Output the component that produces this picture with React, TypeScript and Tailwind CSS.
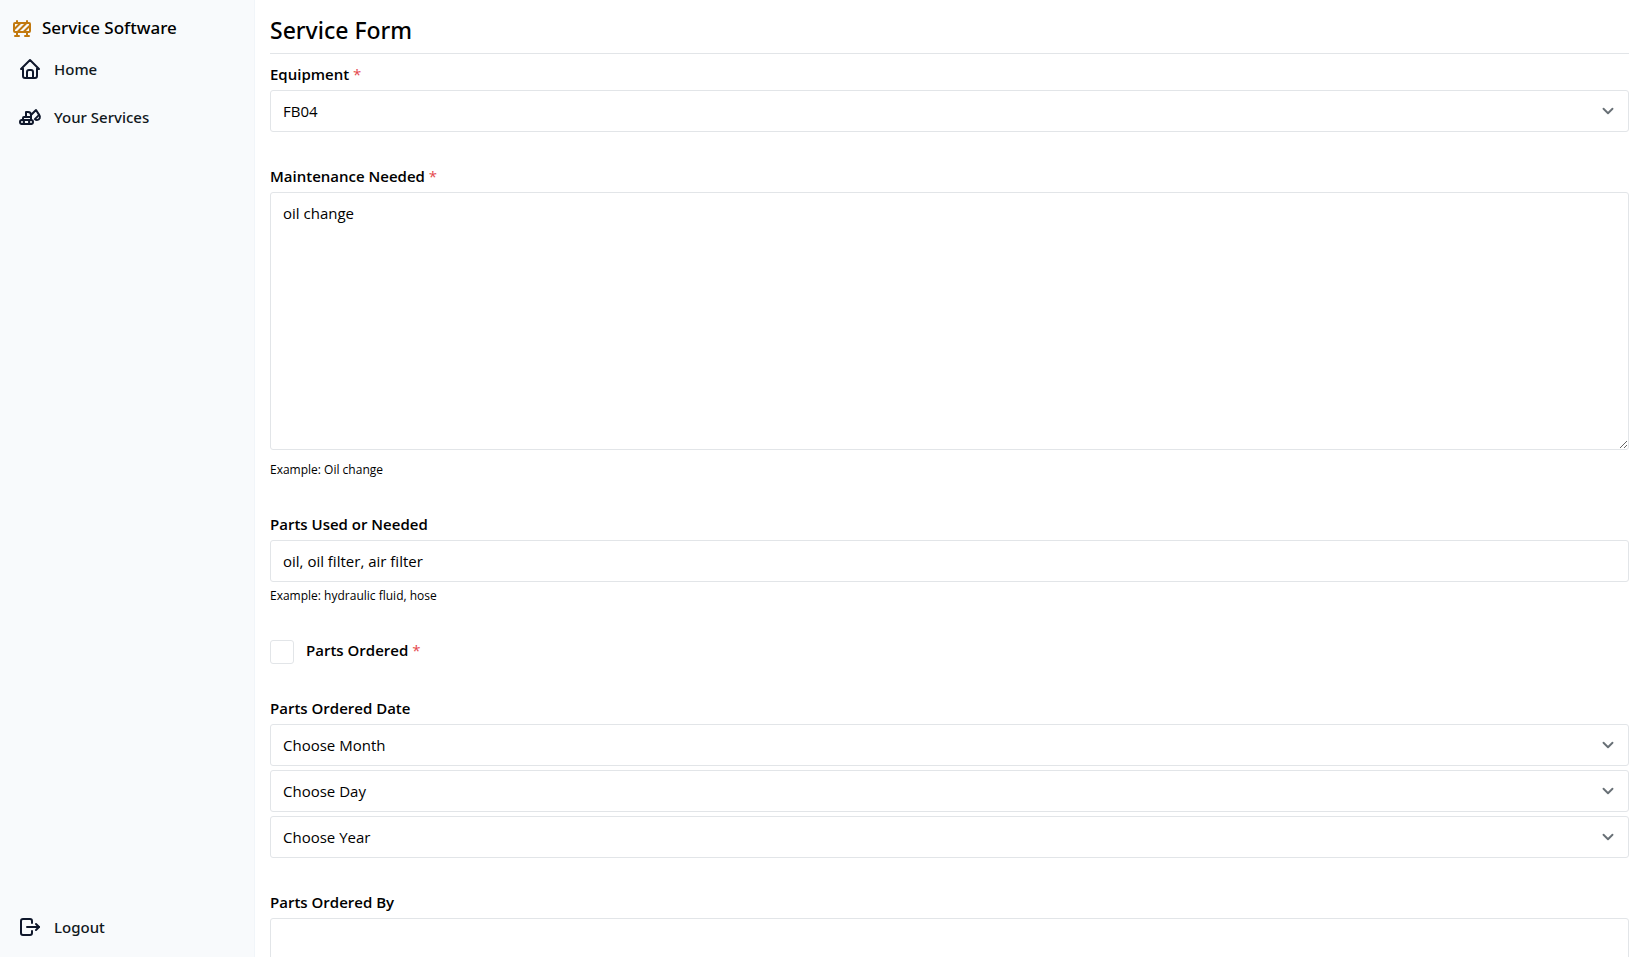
import type {ReactNode} from 'react'
import type {IconType} from 'react-icons'
import {
  TbBackhoe,
  TbBarrierBlock,
  TbChevronDown,
  TbHome,
  TbLogout,
} from 'react-icons/tb'

const controlStyles =
  'block w-full rounded-[3px] border border-[#e2e5e8] bg-white px-3 py-2 text-[15px] leading-6 text-black outline-none focus:border-gray-400'

export default function App() {
  return (
    <div className="flex h-screen bg-white font-['Open_Sans','Noto_Sans',sans-serif] text-black">
      <Sidebar />
      <main className="min-w-0 flex-1 overflow-y-auto pt-3 pr-[13px] pb-8 pl-[15px] [scrollbar-width:none]">
        <h1 className="mb-2 h-[42px] border-b border-[#e2e5e8] font-['Noto_Sans',sans-serif] text-[23px] leading-9 font-medium">
          Service Form
        </h1>
        <ServiceForm />
      </main>
    </div>
  )
}

function Sidebar() {
  return (
    <aside className="flex w-[255px] shrink-0 flex-col border-r border-[#f1f5f9] bg-[#f8fafc] pb-1.5 font-['Noto_Sans',sans-serif]">
      <div className="flex items-center gap-2 px-2.5 pt-4 pb-[5px] text-[17px] leading-6 font-medium">
        <TbBarrierBlock className="size-6 text-[#c2790f]" />
        Service Software
      </div>
      <nav className="flex flex-1 flex-col">
        <SidebarLink icon={TbHome} label="Home" />
        <SidebarLink icon={TbBackhoe} label="Your Services" />
        <div className="mt-auto">
          <SidebarLink icon={TbLogout} label="Logout" />
        </div>
      </nav>
    </aside>
  )
}

function SidebarLink(props: {icon: IconType; label: string}) {
  const Icon = props.icon
  return (
    <a
      href="#"
      className="flex h-12 items-center gap-3 px-[18px] text-[15px] leading-6 font-medium text-[#11181c]"
    >
      <Icon className="size-6 text-slate-900" />
      {props.label}
    </a>
  )
}

function ServiceForm() {
  return (
    <form className="flex flex-col gap-8">
      <Field id="equipment" label="Equipment" required>
        <Select id="equipment" options={['FB04']} />
      </Field>

      <Field id="maintenance" label="Maintenance Needed" required>
        <textarea
          id="maintenance"
          rows={10}
          defaultValue="oil change"
          className={controlStyles}
        />
        <Hint className="pt-2.5">Example: Oil change</Hint>
      </Field>

      <Field id="parts" label="Parts Used or Needed">
        <input
          id="parts"
          type="text"
          defaultValue="oil, oil filter, air filter"
          className={controlStyles}
        />
        <Hint className="pt-1">Example: hydraulic fluid, hose</Hint>
      </Field>

      <div className="flex items-start gap-3">
        <input
          id="ordered"
          type="checkbox"
          className="mt-0.5 size-6 appearance-none rounded-[3px] border border-[#e2e5e8] bg-white checked:bg-gray-700"
        />
        <Label htmlFor="ordered" required>
          Parts Ordered
        </Label>
      </div>

      <Field id="month" label="Parts Ordered Date">
        <div className="flex flex-col gap-1">
          <Select id="month" options={['Choose Month']} />
          <Select id="day" label="Day" options={['Choose Day']} />
          <Select id="year" label="Year" options={['Choose Year']} />
        </div>
      </Field>

      <Field id="ordered-by" label="Parts Ordered By">
        <input id="ordered-by" type="text" className={controlStyles} />
      </Field>
    </form>
  )
}

function Field(props: {
  id: string
  label: string
  required?: boolean
  children: ReactNode
}) {
  return (
    <div>
      <div className="mb-1 flex">
        <Label htmlFor={props.id} required={props.required}>
          {props.label}
        </Label>
      </div>
      {props.children}
    </div>
  )
}

function Label(props: {
  htmlFor: string
  required?: boolean
  children: ReactNode
}) {
  return (
    <label
      htmlFor={props.htmlFor}
      className="text-[15px] leading-6 font-semibold"
    >
      {props.children}
      {props.required && (
        <span className="font-normal text-[#e5484d]"> *</span>
      )}
    </label>
  )
}

function Hint(props: {className: string; children: ReactNode}) {
  return (
    <div className={props.className}>
      <p className="text-xs leading-5">{props.children}</p>
    </div>
  )
}

function Select(props: {id: string; label?: string; options: string[]}) {
  return (
    <div className="relative">
      <select
        id={props.id}
        aria-label={props.label}
        className={`${controlStyles} appearance-none pr-10`}
      >
        {props.options.map((option) => (
          <option key={option}>{option}</option>
        ))}
      </select>
      <TbChevronDown className="pointer-events-none absolute top-3 right-3 size-[18px] stroke-[2.5] text-[#687076]" />
    </div>
  )
}
